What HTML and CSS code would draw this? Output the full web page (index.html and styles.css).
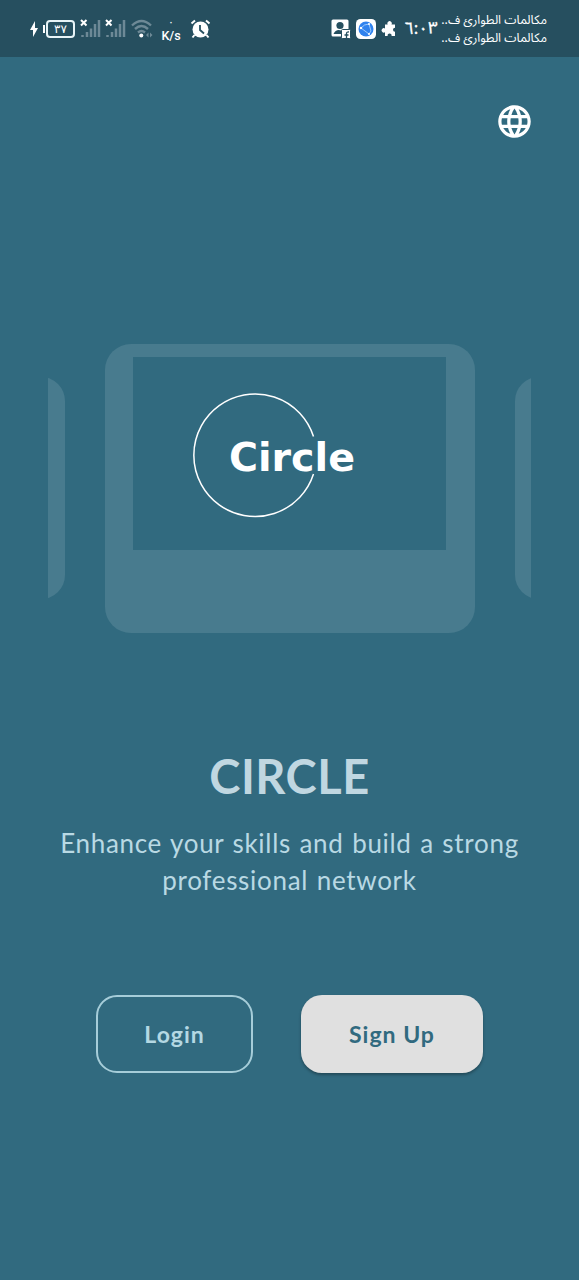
FILE: index.html
```html
<!DOCTYPE html>
<html lang="en">
<head>
<meta charset="utf-8">
<title>Circle</title>
<link rel="stylesheet" href="styles.css">
</head>
<body>
<header class="status">
  <div class="status-left">
    <svg class="bolt" width="8" height="16" viewBox="0 0 8 16"><path d="M5 0 0 9h3v7l5-9H5z" fill="#fff"/></svg>
    <div class="battery"><span>٣٧</span></div>
    <svg class="signal" width="21" height="20" viewBox="0 0 21 20"><path d="M2.500 16v2M7 13v5M11 9.500v8.500M15 5v13M19 1v17" stroke="#6d8996" stroke-width="2.500"/><path d="m1 1 5.500 5.500m0-5.500L1 6.500" stroke="#fff" stroke-width="2"/></svg>
    <svg class="signal" width="21" height="20" viewBox="0 0 21 20"><path d="M2.500 16v2M7 13v5M11 9.500v8.500M15 5v13M19 1v17" stroke="#6d8996" stroke-width="2.500"/><path d="m1 1 5.500 5.500m0-5.500L1 6.500" stroke="#fff" stroke-width="2"/></svg>
    <svg class="wifi" width="22" height="20" viewBox="0 0 22 20"><g fill="none" stroke="#6d8996" stroke-width="2.400"><path d="M1 6.500q9.500-9 19 0M4 10q6.500-6 13 0M7 13.500q3.500-3 7 0"/></g><circle cx="10.300" cy="16.500" r="2" fill="#fff"/><path d="m17.500 13.500-2.500 2.500 2.500 2.500zm1.500 0 2.500 2.500-2.500 2.500z" fill="#6d8996"/></svg>
    <div class="speed"><span class="speed-value">٠</span><span class="speed-unit">K/s</span></div>
    <svg class="alarm" width="21" height="20" viewBox="0 0 21 20"><path d="M1.500 4.500 5 1.500M19.500 4.500 16 1.500M4.500 16 2.500 18.500M16.500 16l2 2.500" stroke="#fff" stroke-width="2"/><circle cx="10.500" cy="10.500" r="8" fill="#fff"/><path d="M10 6v5l4 3.500" stroke="#264f5f" stroke-width="1.800" fill="none"/></svg>
  </div>
  <div class="status-right">
    <svg width="20" height="20" viewBox="0 0 20 20"><rect x=".5" y=".5" width="17" height="17" rx="1.500" fill="#fff"/><circle cx="9" cy="6.500" r="3.600" fill="#264f5f"/><path d="M2.500 15q2-4.500 6.500-3.800 3 0 4.500 1.800v2z" fill="#264f5f"/><rect x="10.500" y="10.500" width="9" height="9" rx="1" fill="#fff" stroke="#264f5f"/><path d="M15.500 19v-4.500q0-1.800 2.500-1.500M13.500 16h4" stroke="#264f5f" stroke-width="1.300" fill="none"/></svg>
    <svg class="network" width="20" height="20" viewBox="0 0 20 20"><rect width="20" height="20" rx="4.500" fill="#fff"/><circle cx="10" cy="10" r="7.500" fill="#2f82ee"/><path d="M5 9q3-4 8-4M5 9l8 6M13 5l2 7-2 3" stroke="#b9dcff" stroke-width=".8" fill="none"/><circle cx="5" cy="9" r="1.200" fill="#fff"/><circle cx="13" cy="5" r="1" fill="#fff"/><circle cx="13" cy="15" r="1" fill="#fff"/></svg>
    <svg class="puzzle" width="16" height="16" viewBox="0 0 16 16"><path d="M4 3.500h2.700a2.200 2.200 0 1 1 3.800 0H14v3.300a2 2 0 1 0 0 4V15h-3.500a2 2 0 1 0-3.800 0H4v-3.800a2.200 2.200 0 1 1 0-3.700z" fill="#fff"/></svg>
    <span class="clock">٦:٠٣</span>
    <div class="carriers" dir="rtl"><span>مكالمات الطوارئ ف..</span><span>مكالمات الطوارئ ف..</span></div>
  </div>
</header>
<main class="screen">
  <div class="toolbar">
    <svg width="39" height="39" viewBox="0 0 24 24"><path fill="#fff" d="M11.990 2C6.470 2 2 6.480 2 12s4.470 10 9.990 10C17.520 22 22 17.520 22 12S17.520 2 11.990 2zm6.930 6h-2.950c-.32-1.250-.78-2.450-1.380-3.560 1.840.63 3.370 1.910 4.330 3.560zM12 4.040c.83 1.200 1.480 2.530 1.910 3.960h-3.820c.43-1.430 1.080-2.760 1.910-3.960zM4.260 14C4.100 13.360 4 12.690 4 12s.1-1.360.26-2h3.380c-.08.66-.14 1.320-.14 2s.06 1.340.14 2H4.260zm.82 2h2.950c.32 1.250.78 2.450 1.380 3.560-1.840-.63-3.370-1.900-4.330-3.560zm2.950-8H5.080c.96-1.660 2.490-2.930 4.330-3.560C8.810 5.550 8.350 6.750 8.030 8zM12 19.960c-.83-1.200-1.480-2.530-1.910-3.960h3.820c-.43 1.430-1.080 2.760-1.910 3.960zM14.340 14H9.660c-.09-.66-.16-1.320-.16-2s.07-1.350.16-2h4.680c.09.65.16 1.320.16 2s-.07 1.340-.16 2zm.25 5.560c.6-1.110 1.060-2.310 1.380-3.560h2.950c-.96 1.650-2.490 2.930-4.330 3.560zM16.360 14c.08-.66.14-1.320.14-2s-.06-1.340-.14-2h3.380c.16.640.26 1.310.26 2s-.1 1.360-.26 2h-3.380z"/></svg>
  </div>
  <section class="carousel">
    <div class="card side"></div>
    <div class="card center">
      <div class="slide">
        <svg width="313" height="193" viewBox="133 357 313 193"><path d="M313.500 436.500A61.300 61.300 0 1 0 313.500 474" fill="none" stroke="#fff" stroke-width="1.500"/><text class="logo-text" x="229" y="470.500" textLength="126" lengthAdjust="spacingAndGlyphs">Circle</text></svg>
      </div>
    </div>
    <div class="card side"></div>
  </section>
  <h1 class="title">CIRCLE</h1>
  <p class="subtitle">Enhance your skills and build a strong<br>professional network</p>
  <div class="actions">
    <button class="btn login">Login</button>
    <button class="btn signup">Sign Up</button>
  </div>
</main>
</body>
</html>
```
FILE: styles.css
```css
* { box-sizing: border-box; }
body {
  margin: 0;
  height: 1280px;
  overflow: hidden;
  background: #316a7f;
  font-family: Lato, "Liberation Sans", sans-serif;
}
svg { display: block; flex: none; }
.status {
  height: 57px;
  padding: 0 32px 0 30px;
  display: flex;
  justify-content: space-between;
  background: #264f5f;
  color: #fff;
}
.status-left, .status-right { display: flex; align-items: center; }
.status-left { font-family: Roboto, "DejaVu Sans", sans-serif; }
.battery {
  width: 29px;
  height: 18px;
  margin-left: 8px;
  border: 2px solid #e8f4f7;
  border-radius: 4px;
  display: flex;
  align-items: center;
  justify-content: center;
  font: 12px/14px "DejaVu Sans", sans-serif;
  position: relative;
}
.battery::before {
  content: "";
  position: absolute;
  left: -5px;
  top: 3px;
  width: 2px;
  height: 8px;
  background: #fff;
}
.signal { margin-left: 5px; }
.signal + .signal { margin-left: 4px; }
.wifi { margin-left: 5px; }
.speed {
  width: 20px;
  margin-left: 8px;
  padding-top: 1px;
  display: flex;
  flex-direction: column;
  align-items: center;
  font-size: 12.5px;
  font-weight: 500;
}
.speed-value { font-size: 11px; line-height: 13px; }
.speed-unit { line-height: 15px; margin-top: -1px; }
.alarm { margin-left: 9px; }
.network { margin-left: 5px; }
.puzzle { margin-left: 5px; }
.clock {
  width: 34px;
  margin-left: 7px;
  font: 17px/24px "Noto Sans Arabic", "DejaVu Sans", sans-serif;
  white-space: nowrap;
  -webkit-text-stroke: .3px #fff;
}
.carriers {
  width: 107px;
  margin-left: 2px;
  display: flex;
  flex-direction: column;
  font: 12.4px/18px "Noto Sans Arabic", "DejaVu Sans", sans-serif;
  white-space: nowrap;
}
.screen { padding: 45px 48px 0; display: flex; flex-direction: column; }
.toolbar { display: flex; justify-content: flex-end; margin-right: -3px; }
.carousel {
  height: 290px;
  margin-top: 202px;
  display: flex;
  align-items: center;
  justify-content: center;
  gap: 40px;
  overflow: hidden;
}
.card { flex: none; background: #487b8e; }
.center { width: 370px; height: 289px; padding: 13px 28px; border-radius: 26px; }
.side { width: 280px; height: 222px; border-radius: 24px; }
.slide { width: 313px; height: 193px; background: #316a7f; }
.logo-text {
  font-family: "DejaVu Sans", sans-serif;
  font-weight: bold;
  font-size: 39px;
  fill: #fff;
}
.title {
  margin: 114px 0 0;
  font-size: 47px;
  line-height: 58px;
  font-weight: 700;
  letter-spacing: .5px;
  text-align: center;
  color: #c0d7e1;
}
.subtitle {
  margin: 20px 0 0;
  font-size: 26px;
  line-height: 37px;
  letter-spacing: .7px;
  word-spacing: 1.2px;
  text-align: center;
  white-space: nowrap;
  color: #b9d9e4;
}
.actions { display: flex; justify-content: center; gap: 48px; margin-top: 96px; }
.btn {
  height: 78px;
  padding: 0;
  border: 0;
  border-radius: 21px;
  font: 700 23px Lato, sans-serif;
  letter-spacing: 1px;
}
.login { width: 157px; border: 2px solid #a6cdd9; background: none; color: #b4d8e3; }
.signup { width: 182px; background: #e0e0e0; color: #316a7f; box-shadow: 0 2px 3px rgba(0, 0, 0, .3); }
```
